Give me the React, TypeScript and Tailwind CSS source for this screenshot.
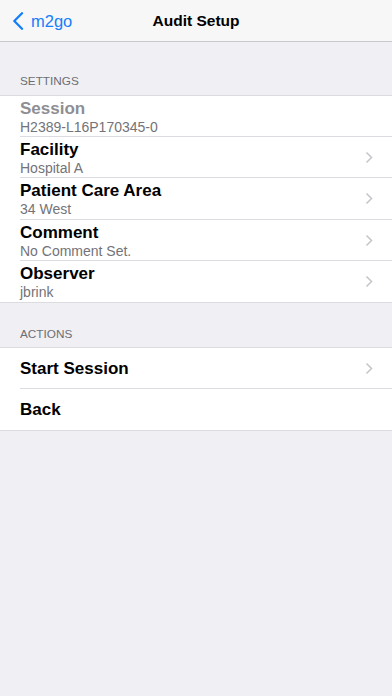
import React from "react";

type Row = { title: string; detail?: string; disabled?: boolean; chevron?: boolean };

const settings: Row[] = [
  { title: "Session", detail: "H2389-L16P170345-0", disabled: true },
  { title: "Facility", detail: "Hospital A", chevron: true },
  { title: "Patient Care Area", detail: "34 West", chevron: true },
  { title: "Comment", detail: "No Comment Set.", chevron: true },
  { title: "Observer", detail: "jbrink", chevron: true },
];

const actions: Row[] = [
  { title: "Start Session", chevron: true },
  { title: "Back" },
];

function Chevron() {
  return (
    <svg width="8" height="13" viewBox="0 0 8 13" className="shrink-0">
      <polyline points="1.5,1.5 6.5,6.5 1.5,11.5" fill="none" stroke="#c7c7cc" strokeWidth="1.6" />
    </svg>
  );
}

function SettingRow({ row, last }: { row: Row; last: boolean }) {
  return (
    <div className="relative flex h-[41.2px] items-start pl-5 pr-[19px]">
      <div className="flex-1 pt-[3px]">
        <div className={`text-[17px] font-bold leading-[20px] ${row.disabled ? "text-[#8e8e93]" : "text-black"}`}>
          {row.title}
        </div>
        <div className="text-[14px] leading-[16px] text-[#737378]">{row.detail}</div>
      </div>
      {row.chevron && (
        <div className="flex h-full items-center">
          <Chevron />
        </div>
      )}
      {!last && <div className="absolute bottom-0 left-5 right-0 h-px bg-[#dcdce0]" />}
    </div>
  );
}

function ActionRow({ row, last }: { row: Row; last: boolean }) {
  return (
    <div className="relative flex h-[41.2px] items-center pl-5 pr-[19px]">
      <div className="flex-1 text-[17px] font-bold leading-[20px] text-black">{row.title}</div>
      {row.chevron && <Chevron />}
      {!last && <div className="absolute bottom-0 left-5 right-0 h-px bg-[#dcdce0]" />}
    </div>
  );
}

export default function App() {
  return (
    <div className="flex h-[696px] w-[392px] flex-col bg-[#efeff4]" style={{ fontFamily: '"Liberation Sans", Arial, sans-serif' }}>
      <div className="relative flex h-[42px] shrink-0 items-center border-b border-[#c8c7cc] bg-[#f7f7f7]">
        <div className="flex items-center gap-[7px] pl-3 text-[#157efb]">
          <svg width="12" height="18" viewBox="0 0 12 18">
            <polyline points="10,1.2 2.3,9 10,16.8" fill="none" stroke="#157efb" strokeWidth="2.3" strokeLinecap="round" strokeLinejoin="round" />
          </svg>
          <span className="text-[16.5px] leading-[20px]">m2go</span>
        </div>
        <div className="absolute inset-x-0 text-center text-[15.5px] font-bold leading-[20px] text-black pointer-events-none">
          Audit Setup
        </div>
      </div>

      <div className="px-5 pb-[7px] pt-[32px] text-[11.75px] leading-[14px] text-[#6d6d72]">SETTINGS</div>
      <div className="border-y border-[#dcdce0] bg-white">
        {settings.map((r, i) => (
          <SettingRow key={r.title} row={r} last={i === settings.length - 1} />
        ))}
      </div>

      <div className="px-5 pb-[6px] pt-[24px] text-[11.75px] leading-[14px] text-[#6d6d72]">ACTIONS</div>
      <div className="border-y border-[#dcdce0] bg-white">
        {actions.map((r, i) => (
          <ActionRow key={r.title} row={r} last={i === actions.length - 1} />
        ))}
      </div>
    </div>
  );
}
